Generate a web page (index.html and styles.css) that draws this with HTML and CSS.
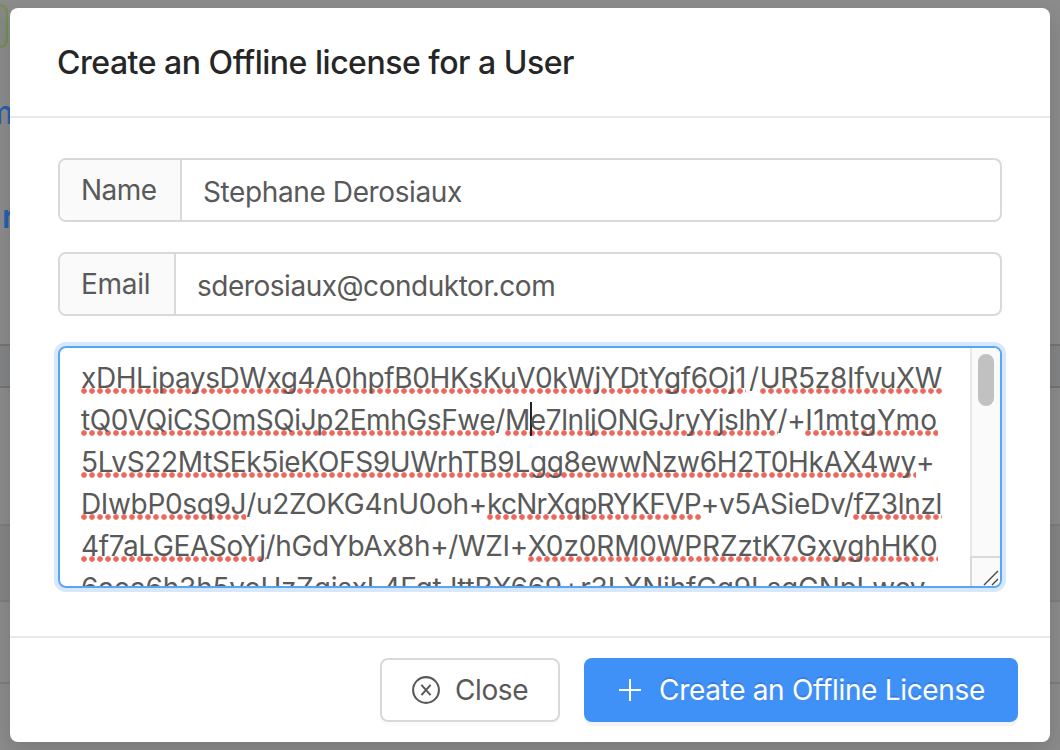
FILE: index.html
```html
<!DOCTYPE html>
<html lang="en">
<head>
<meta charset="utf-8">
<title>Create an Offline license for a User</title>
<link rel="stylesheet" href="styles.css">
</head>
<body>
<div class="page">
  <div class="intro">
    <div class="tag"></div>
    <div class="link">m</div>
    <div class="link strong">r</div>
  </div>
  <div class="row head"></div>
  <div class="row tall"></div>
  <div class="row hover"></div>
  <div class="row"></div>
  <div class="row last"></div>
</div>
<div class="mask">
  <section class="modal">
    <header class="header"><h1 class="title">Create an Offline license for a User</h1></header>
    <main class="body">
      <div class="group">
        <label class="addon name-label">Name</label>
        <div class="input name-value">Stephane Derosiaux</div>
      </div>
      <div class="group">
        <label class="addon email-label">Email</label>
        <div class="input email-value">sderosiaux@conduktor.com</div>
      </div>
      <div class="textarea">
        <div class="text">
          <div class="line l1"><span class="bad tight">xDHLipaysDWxg4A0hpfB0HKsKuV0kWjYDtYgf6Oj1</span><span class="slash">/</span><span class="bad">UR5z8IfvuXW</span></div>
          <div class="line l2"><span class="bad">tQ0VQiCSOmSQiJp2EmhGsFwe</span>/<span class="bad">M<i class="caret"></i>e7lnljONGJryYjslhY</span>/+<span class="bad wide">I1mtgYmo</span></div>
          <div class="line l3"><span class="bad">5LvS22MtSEk5ieKOFS9UWrhTB9Lgg8ewwNzw6H2T0HkAX4wy</span>+</div>
          <div class="line l4"><span class="bad">DIwbP0sq9J</span>/u2ZOKG4nU0oh+<span class="bad tight">kcNrXqpRYKFVP</span>+v5ASieDv/<span class="bad">fZ3lnzl</span></div>
          <div class="line l5"><span class="bad">4f7aLGEASoYj</span>/hGdYbAx8h+/WZI+<span class="bad wide">X0z0RM0WPRZztK7GxyghHK0</span></div>
          <div class="line l6">6aea6h3h5veUzZgisxL4FgtJttBX669+r3LXNihfGg9LsgGNpLwcv</div>
        </div>
        <div class="scroll">
          <div class="track"><div class="thumb"></div></div>
          <div class="corner">
            <svg width="28" height="28" viewBox="0 0 28 28" fill="none" stroke="#444" stroke-width="1.4"><path d="M12 27 26 13M20 27l6-6"/></svg>
          </div>
        </div>
      </div>
    </main>
    <footer class="footer">
      <button class="btn close">
        <svg class="icon" width="28" height="28" viewBox="0 0 28 28" fill="none" stroke="#595959"><circle cx="14" cy="14" r="12.9" stroke-width="2.1"/><path d="M9.4 8.8 18.6 19.2M18.6 8.8 9.4 19.2" stroke-width="2"/></svg>
        <span class="close-text">Close</span>
      </button>
      <button class="btn primary">
        <svg class="icon" width="28" height="28" viewBox="0 0 28 28" fill="none" stroke="#fff" stroke-width="2"><path d="M14 3v22M3 14h22"/></svg>
        <span class="create-text">Create an Offline License</span>
      </button>
    </footer>
  </section>
</div>
</body>
</html>
```
FILE: styles.css
```css
* { box-sizing: border-box; }
body { margin: 0; width: 1060px; height: 750px; overflow: hidden; font: 28px/42px Inter, sans-serif; color: #595959; background: #8c8c8c; }
.page { position: absolute; inset: 0; overflow: hidden; display: flex; flex-direction: column; }
.page > * { flex-shrink: 0; }
.intro { height: 344px; padding-top: 4px; }
.tag { width: 8px; height: 44px; border: 2px solid #71914f; border-left: 0; border-radius: 0 8px 8px 0; background: #868a82; }
.link { margin-top: 44px; height: 42px; font-size: 32px; font-weight: 500; text-indent: -15px; color: #2460b0; }
.link.strong { margin-top: 62px; font-weight: 600; text-indent: 2px; }
.row { height: 82px; border-bottom: 2px solid #7e7e7e; }
.row.head { height: 44px; border-top: 2px solid #757575; border-bottom-color: #757575; background: #838587; }
.row.tall { height: 138px; }
.row.hover { height: 76px; background: #858585; }
.row.last { border: 0; }
.mask { position: absolute; inset: 0; padding: 8px 10px; }
.modal { height: 734px; display: flex; flex-direction: column; background: #fff; border-radius: 8px; box-shadow: 0 8px 24px rgba(0, 0, 0, .15); }
.header { height: 110px; padding: 31px 47px 0; border-bottom: 2px solid #e8e8e8; }
.title { margin: 0; font-size: 32px; line-height: 48px; font-weight: 500; letter-spacing: -.48px; color: #262626; white-space: nowrap; }
.body { flex: 1; padding: 40px 48px 0; }
.group { display: flex; height: 64px; margin-bottom: 30px; border: 2px solid #d9d9d9; border-radius: 8px; overflow: hidden; }
.addon { padding: 9px 0 0 21px; background: #fafafa; border-right: 2px solid #d9d9d9; }
.name-label { width: 122px; letter-spacing: -.5px; }
.email-label { width: 116px; letter-spacing: -.25px; }
.input { padding: 11px 0 0 20px; }
.name-value { letter-spacing: -.387px; padding-left: 21px; }
.email-value { letter-spacing: -.47px; padding-left: 21px; }
.textarea { display: flex; height: 242px; border: 2px solid #57a5f8; border-radius: 8px; box-shadow: 0 0 0 4px #d7e7fc; overflow: hidden; }
.text { flex: 1; padding: 9px 0 0 21px; min-width: 0; white-space: nowrap; }
.line { height: 42px; }
.bad { display: inline-block; height: 42px; vertical-align: top; background: radial-gradient(circle at 3px 3px, #ec665c 1.6px, #ef837a 2.5px, transparent 3.3px) 0 31px / 8px 6px repeat-x; }
.l1 { letter-spacing: -.31px; }
.l1 .tight { letter-spacing: -.4px; }
.slash { margin: 0 1px 0 3px; }
.l2 { letter-spacing: -.41px; }
.l2 .wide { letter-spacing: .45px; }
.l3 { letter-spacing: -.33px; }
.l4 { letter-spacing: -.34px; }
.l4 .tight { letter-spacing: -.78px; }
.l5 { letter-spacing: -.37px; }
.l5 .wide { letter-spacing: -.13px; }
.l6 { letter-spacing: -.211px; }
.caret { display: inline-block; width: 2px; height: 34px; margin: 3px -2px 0 0; vertical-align: top; background: #222; }
.scroll { width: 30px; display: flex; flex-direction: column; }
.track { height: 208px; padding: 6px 0 0 6px; background: #fafafa; border-left: 2px solid #e8e8e8; }
.thumb { width: 16px; height: 52px; border-radius: 8px; background: #c1c1c1; }
.corner { height: 30px; border: solid #d9d9d9; border-width: 2px 0 0 2px; background: #fafafa; }
.corner svg { display: block; }
.footer { height: 106px; display: flex; justify-content: flex-end; gap: 24px; padding: 20px 32px 0; border-top: 2px solid #e8e8e8; }
.btn { display: flex; align-items: center; height: 64px; margin: 0; font: inherit; color: #595959; background: #fff; border: 2px solid #d9d9d9; border-radius: 8px; white-space: nowrap; box-shadow: 0 4px 0 rgba(0, 0, 0, .016); }
.close { width: 180px; padding: 0 0 0 30px; }
.close-text { margin-left: 15px; letter-spacing: -.4px; }
.primary { width: 434px; padding: 0 0 0 30px; color: #fff; background: #4091f7; border-color: #4091f7; text-shadow: 0 -2px 0 rgba(0, 0, 0, .12); box-shadow: 0 4px 0 rgba(0, 0, 0, .045); }
.create-text { margin-left: 15px; letter-spacing: -.32px; }
```
